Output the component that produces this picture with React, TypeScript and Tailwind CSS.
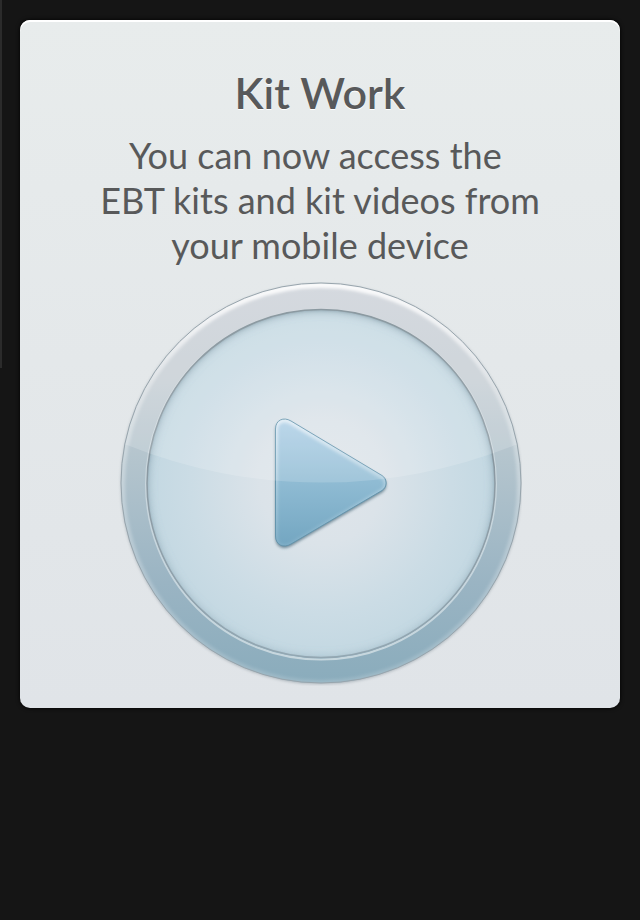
import React from "react";

const TRIANGLE =
  "M157.5 147 C157.5 138 165.500 134.500 173 139 L264 193.500 C269.500 197 269.500 205 264 208.500 L173 262 C165.500 266.500 157.500 263 157.500 254 Z";

function PlayDial() {
  return (
    <svg viewBox="0 0 404 404" className="block w-full" aria-hidden="true">
      <defs>
        <linearGradient id="ring" x1="0" y1="0" x2="0" y2="1">
          <stop offset="0" stopColor="#cdd2d9" />
          <stop offset="0.250" stopColor="#c6ced4" />
          <stop offset="0.450" stopColor="#b3c4cd" />
          <stop offset="0.750" stopColor="#9ab4c3" />
          <stop offset="1" stopColor="#8aacbc" />
        </linearGradient>
        <radialGradient id="face">
          <stop offset="0" stopColor="#e0e5ea" />
          <stop offset="0.350" stopColor="#dbe3e9" />
          <stop offset="0.750" stopColor="#cbdce5" />
          <stop offset="1" stopColor="#c3d8e2" />
        </radialGradient>
        <linearGradient id="arrow" x1="0" y1="0" x2="0" y2="1">
          <stop offset="0" stopColor="#b0d0e7" />
          <stop offset="0.500" stopColor="#8fbbd3" />
          <stop offset="1" stopColor="#73a6c1" />
        </linearGradient>
        <linearGradient id="topLight" x1="0" y1="0" x2="0" y2="1">
          <stop offset="0" stopColor="#fff" stopOpacity="0.900" />
          <stop offset="0.250" stopColor="#fff" stopOpacity="0.350" />
          <stop offset="1" stopColor="#fff" stopOpacity="0.150" />
        </linearGradient>
        <linearGradient id="innerShade" x1="0" y1="0" x2="0" y2="1">
          <stop offset="0" stopColor="#6f8a98" stopOpacity="0.700" />
          <stop offset="1" stopColor="#7b98a8" stopOpacity="0.300" />
        </linearGradient>
        <linearGradient id="innerRim" x1="0" y1="0" x2="0" y2="1">
          <stop offset="0" stopColor="#75868f" />
          <stop offset="0.500" stopColor="#8c9aa3" />
          <stop offset="1" stopColor="#93a7b2" />
        </linearGradient>
        <linearGradient id="innerLip" x1="0" y1="0" x2="0" y2="1">
          <stop offset="0" stopColor="#fff" stopOpacity="0.100" />
          <stop offset="1" stopColor="#d5e1e6" stopOpacity="0.800" />
        </linearGradient>
        <linearGradient id="arrowLight" x1="0" y1="0" x2="0" y2="1">
          <stop offset="0" stopColor="#fff" stopOpacity="0.600" />
          <stop offset="0.550" stopColor="#fff" stopOpacity="0.250" />
          <stop offset="1" stopColor="#fff" stopOpacity="0.100" />
        </linearGradient>
        <filter id="soft2" x="-10%" y="-10%" width="120%" height="120%">
          <feGaussianBlur stdDeviation="1.500" />
        </filter>
        <filter id="soft5" x="-10%" y="-10%" width="120%" height="120%">
          <feGaussianBlur stdDeviation="4" />
        </filter>
        <clipPath id="outerClip"><circle cx="203" cy="201" r="200" /></clipPath>
        <clipPath id="innerClip"><circle cx="203" cy="201.500" r="174" /></clipPath>
        <clipPath id="arrowClip"><path d={TRIANGLE} /></clipPath>
      </defs>
      <circle cx="203" cy="202" r="200" fill="#73818a" opacity="0.500" filter="url(#soft2)" />
      <circle cx="203" cy="201" r="200" fill="url(#ring)" />
      <g clipPath="url(#outerClip)">
        <circle cx="203" cy="202" r="199" fill="none" stroke="url(#topLight)" strokeWidth="6" filter="url(#soft2)" />
      </g>
      <circle cx="203" cy="202.500" r="175" fill="none" stroke="url(#innerLip)" strokeWidth="2" />
      <circle cx="203" cy="201.500" r="174" fill="url(#face)" />
      <g clipPath="url(#innerClip)">
        <circle cx="203" cy="201.500" r="176" fill="none" stroke="url(#innerShade)" strokeWidth="7" filter="url(#soft5)" />
        <circle cx="203" cy="202" r="175" fill="none" stroke="url(#innerShade)" strokeWidth="3" filter="url(#soft2)" />
      </g>
      <circle cx="203" cy="201.500" r="174" fill="none" stroke="url(#innerRim)" strokeWidth="1.500" />
      <path d={TRIANGLE} transform="translate(0 2)" fill="#3f6172" opacity="0.700" filter="url(#soft2)" />
      <path d={TRIANGLE} fill="url(#arrow)" />
      <g clipPath="url(#arrowClip)">
        <path d={TRIANGLE} transform="translate(0 1)" fill="none" stroke="url(#arrowLight)" strokeWidth="5" filter="url(#soft2)" />
      </g>
      <path d={TRIANGLE} fill="none" stroke="#6595ad" />
      <path d="M0 0 H404 V163 H397 A519 519 0 0 1 9 163 H0 Z" fill="#fff" opacity="0.160" clipPath="url(#outerClip)" />
      <circle cx="203" cy="201" r="200" fill="none" stroke="#98a5ad" />
    </svg>
  );
}

export default function App() {
  return (
    <main className="relative min-h-screen bg-[#151515] p-5 font-[Lato,sans-serif]">
      <div className="absolute top-0 left-0 h-[368px] w-0.5 bg-[#2b2b2b]" />
      <section className="flex flex-col items-center rounded-[10px] bg-linear-to-b from-[#e8ecec] to-[#e0e4e8] px-5 pt-12 pb-[22px] text-[#58595a] shadow-[inset_0_2px_0_#fff,0_0_4px_#000]">
        <h1 className="text-[43px] leading-[50px] font-semibold [text-shadow:0_1px_0_#fff]">Kit Work</h1>
        <p className="mt-[15px] text-center text-[36px] leading-[45px]">
          You can now access the&nbsp;<br />
          EBT kits and kit videos from
          <br />
          your mobile device
        </p>
        <button type="button" aria-label="Play video" className="mt-[14px] w-full max-w-[404px] cursor-pointer">
          <PlayDial />
        </button>
      </section>
    </main>
  );
}
